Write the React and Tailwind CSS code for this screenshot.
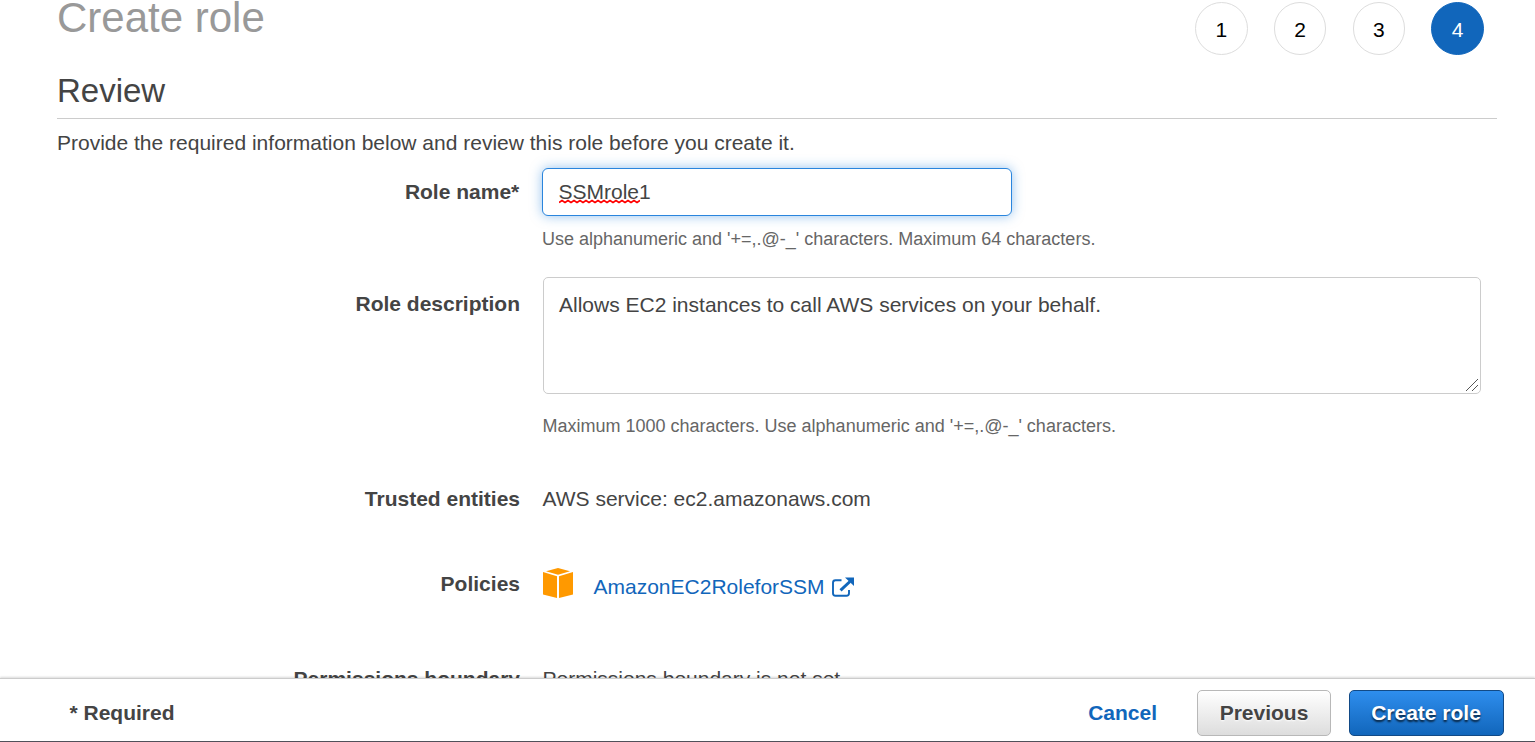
const labelCls = "w-[463px] shrink-0 text-right font-bold";

function Row({ label, height, children }) {
  return (
    <div className={`flex ${height}`}>
      <div className={labelCls}>{label}</div>
      <div className="min-w-0 flex-1">{children}</div>
    </div>
  );
}

function Step({ n, active }) {
  return (
    <div
      className={`flex h-[52.5px] w-[52.5px] items-center justify-center rounded-full border pt-[2px] leading-none ${
        active ? "border-[#1166bb] bg-[#1166bb] text-white" : "border-[#dddddd] bg-white text-black"
      }`}
    >
      {n}
    </div>
  );
}

function PolicyIcon() {
  return (
    <svg className="mt-[-1px] h-[30px] w-[30px]" viewBox="0 0 30 30" fill="#ff9900">
      <path d="M3 3.300 15 0l12 3.300L15 6.800z" />
      <path d="M0 4 14 8.200V30L0 26.400z" />
      <path d="M30 4 16 8.200V30L30 26.400z" />
    </svg>
  );
}

function ExternalIcon() {
  return (
    <svg className="h-[22px] w-[24px]" viewBox="0 0 24 22" fill="none" stroke="#1166bb">
      <path d="M10.500 3.200H4.500Q2 3.200 2 5.700v10.500Q2 18.700 4.500 18.700H15.500Q18 18.700 18 16.200V13" strokeWidth="1.9" />
      <path d="M9.500 13.300 19 4.500" strokeWidth="3" />
      <path d="M14 .5H23V9z" fill="#1166bb" stroke="none" />
    </svg>
  );
}

export default function App() {
  return (
    <div className="flex h-[742px] w-[1535px] flex-col overflow-hidden bg-white font-['Liberation_Sans',Arial,sans-serif] text-[21px] leading-[30px] text-[#444444]">
      <main className="h-[678px] shrink-0 overflow-hidden pl-[57px]">
        <div className="w-[1440px]">
          <header className="flex h-[57px] justify-between pr-[13.2px]">
            <h1 className="text-[42px] leading-[36px] text-[#999999]">Create role</h1>
            <div className="flex gap-[26.25px] pt-[2px]">
              <Step n="1" />
              <Step n="2" />
              <Step n="3" />
              <Step n="4" active />
            </div>
          </header>
          <h2 className="mt-[14px] border-b border-[#cccccc] pb-[7px] text-[33px] leading-[40px]">Review</h2>
          <p className="mb-[2px] leading-[47px]">Provide the required information below and review this role before you create it.</p>

          <Row label={<div className="pt-[9px] pr-[0.75px]">Role name*</div>} height="h-[109px]">
            <div className="pl-[22px]">
              <div className="flex h-[48px] w-[470px] items-center rounded-[6px] border border-[#2a85dd] bg-white pl-[15.5px] shadow-[0_0_12px_rgba(42,133,221,0.5)]">
                <span className="relative">
                  SSMrole1
                  <svg className="absolute top-[22px] left-0 h-[5px] w-[81px]" viewBox="0 0 81 5" fill="none">
                    <path
                      d="M0 3.500 L3 1.500 L6 3.500 L9 1.500 L12 3.500 L15 1.500 L18 3.500 L21 1.500 L24 3.500 L27 1.500 L30 3.500 L33 1.500 L36 3.500 L39 1.500 L42 3.500 L45 1.500 L48 3.500 L51 1.500 L54 3.500 L57 1.500 L60 3.500 L63 1.500 L66 3.500 L69 1.500 L72 3.500 L75 1.500 L78 3.500 L81 1.500"
                      stroke="#ff0000"
                      strokeWidth="1.700"
                    />
                  </svg>
                </span>
              </div>
            </div>
            <p className="pt-[8px] pl-[22px] text-[18px] text-[#666666]">
              Use alphanumeric and '+=,.@-_' characters. Maximum 64 characters.
            </p>
          </Row>

          <Row label={<div className="pt-[12px]">Role description</div>} height="h-[207px]">
            <div className="pl-[23px]">
              <div className="flex h-[117px] w-[938px] justify-between rounded-[5px] border border-[#cccccc] pt-[12px] pl-[15px]">
                <span>Allows EC2 instances to call AWS services on your behalf.</span>
                <svg className="mb-[1px] h-[14px] w-[14px] self-end" viewBox="0 0 14 14" stroke="#555555" fill="none">
                  <path d="M0 13 12 1M6 13 12 7" />
                </svg>
              </div>
            </div>
            <p className="pt-[17px] pl-[22.5px] text-[18px] text-[#666666]">
              Maximum 1000 characters. Use alphanumeric and '+=,.@-_' characters.
            </p>
          </Row>

          <Row label="Trusted entities" height="h-[85px]">
            <p className="pl-[22.5px]">AWS service: ec2.amazonaws.com</p>
          </Row>

          <Row label="Policies" height="h-[95px]">
            <div className="flex pl-[23px]">
              <PolicyIcon />
              <a className="flex pt-[3px] pl-[20.5px] text-[#1166bb]">
                AmazonEC2RoleforSSM
                <span className="pt-[5px] pl-[6px]">
                  <ExternalIcon />
                </span>
              </a>
            </div>
          </Row>

          <Row label="Permissions boundary" height="h-[40px]">
            <p className="pl-[22.5px]">Permissions boundary is not set</p>
          </Row>
        </div>
      </main>

      <footer className="flex h-[64px] shrink-0 items-start border-t border-b border-t-[#cccccc] border-b-[#50505a] bg-white pr-[31px] pl-[69.5px] font-bold shadow-[0_-1px_2px_rgba(0,0,0,0.15)]">
        <span className="pt-[19px]">* Required</span>
        <a className="ml-auto pt-[19px] text-[#1166bb]">Cancel</a>
        <button className="mt-[11px] ml-[40px] h-[46px] w-[134px] rounded-[5px] border border-[#b8b8b8] bg-linear-to-b from-white to-[#dddddd] [text-shadow:0_1px_2px_#ffffff]">
          Previous
        </button>
        <button className="mt-[11px] ml-[18px] h-[46px] w-[155px] rounded-[5px] border border-[#124a86] bg-linear-to-b from-[#2e8eee] to-[#1166bb] pr-[1px] text-white [text-shadow:0_2px_2px_rgba(0,0,0,0.7)]">
          Create role
        </button>
      </footer>
    </div>
  );
}
